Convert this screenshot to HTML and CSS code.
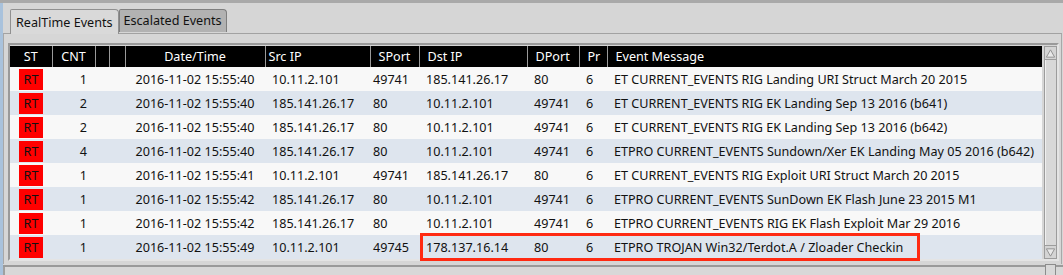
FILE: index.html
```html
<!DOCTYPE html>
<html lang="en">
<head>
  <meta charset="UTF-8">
  <title>Events</title>
  <link rel="stylesheet" href="styles.css">
</head>
<body>

<div class="topline"></div>
<div class="window">

  <div class="tabs">
    <div class="tab active">RealTime Events</div>
    <div class="tab">Escalated Events</div>
  </div>

  <div class="pane">
    <div class="frame">
      <div class="grid">
        <table class="events">
          <colgroup>
            <col style="width:42px"><col style="width:43px"><col style="width:14px"><col style="width:16px">
            <col style="width:140px"><col style="width:105px"><col style="width:49px"><col style="width:108px">
            <col style="width:52px"><col style="width:28px"><col>
          </colgroup>
          <thead>
            <tr>
              <th class="c">ST</th><th class="c">CNT</th><th></th><th></th>
              <th class="c">Date/Time</th><th class="src">Src IP</th><th>SPort</th><th>Dst IP</th>
              <th>DPort</th><th>Pr</th><th>Event Message</th>
            </tr>
          </thead>
          <tbody>
            <tr><td><span class="rt">RT</span></td><td class="cnt">1</td><td></td><td></td><td class="c">2016-11-02 15:55:40</td><td>10.11.2.101</td><td class="sport">49741</td><td>185.141.26.17</td><td>80</td><td>6</td><td>ET CURRENT_EVENTS RIG Landing URI Struct March 20 2015</td></tr>
            <tr><td><span class="rt">RT</span></td><td class="cnt">2</td><td></td><td></td><td class="c">2016-11-02 15:55:40</td><td>185.141.26.17</td><td class="sport">80</td><td>10.11.2.101</td><td>49741</td><td>6</td><td>ET CURRENT_EVENTS RIG EK Landing Sep 13 2016 (b641)</td></tr>
            <tr><td><span class="rt">RT</span></td><td class="cnt">2</td><td></td><td></td><td class="c">2016-11-02 15:55:40</td><td>185.141.26.17</td><td class="sport">80</td><td>10.11.2.101</td><td>49741</td><td>6</td><td>ET CURRENT_EVENTS RIG EK Landing Sep 13 2016 (b642)</td></tr>
            <tr><td><span class="rt">RT</span></td><td class="cnt">4</td><td></td><td></td><td class="c">2016-11-02 15:55:40</td><td>185.141.26.17</td><td class="sport">80</td><td>10.11.2.101</td><td>49741</td><td>6</td><td>ETPRO CURRENT_EVENTS Sundown/Xer EK Landing May 05 2016 (b642)</td></tr>
            <tr><td><span class="rt">RT</span></td><td class="cnt">1</td><td></td><td></td><td class="c">2016-11-02 15:55:41</td><td>10.11.2.101</td><td class="sport">49741</td><td>185.141.26.17</td><td>80</td><td>6</td><td>ET CURRENT_EVENTS RIG Exploit URI Struct March 20 2015</td></tr>
            <tr><td><span class="rt">RT</span></td><td class="cnt">1</td><td></td><td></td><td class="c">2016-11-02 15:55:42</td><td>185.141.26.17</td><td class="sport">80</td><td>10.11.2.101</td><td>49741</td><td>6</td><td>ETPRO CURRENT_EVENTS SunDown EK Flash June 23 2015 M1</td></tr>
            <tr><td><span class="rt">RT</span></td><td class="cnt">1</td><td></td><td></td><td class="c">2016-11-02 15:55:42</td><td>185.141.26.17</td><td class="sport">80</td><td>10.11.2.101</td><td>49741</td><td>6</td><td>ETPRO CURRENT_EVENTS RIG EK Flash Exploit Mar 29 2016</td></tr>
            <tr><td><span class="rt">RT</span></td><td class="cnt">1</td><td></td><td></td><td class="c">2016-11-02 15:55:49</td><td>10.11.2.101</td><td class="sport">49745</td><td>178.137.16.14</td><td>80</td><td>6</td><td>ETPRO TROJAN Win32/Terdot.A / Zloader Checkin</td></tr>
          </tbody>
        </table>

        <div class="scrollbar">
          <div class="sb-btn"><svg width="12" height="11" viewBox="0 0 12 11"><path d="M6 1.5 L10.5 9.5 L1.5 9.5 Z" fill="#e8e8e8" stroke="#8c8c8c"/></svg></div>
          <div class="sb-track"></div>
          <div class="sb-btn"><svg width="12" height="11" viewBox="0 0 12 11"><path d="M6 9.5 L10.5 1.5 L1.5 1.5 Z" fill="#e8e8e8" stroke="#8c8c8c"/></svg></div>
        </div>

        <div class="highlight"></div>
      </div>
    </div>
  </div>

  <div class="statusbar">
    <div class="sb-cell first"></div>
    <div class="sb-cell"></div>
    <div class="grip"></div>
  </div>

</div>

</body>
</html>
```

FILE: styles.css
```css
body {
  margin: 0;
  background: #d6d6d6;
  font-family: "Noto Sans", "Open Sans", sans-serif;
  font-size: 12.6px;
  color: #111;
  width: 1063px;
  height: 275px;
  overflow: hidden;
}

.topline {
  height: 3px;
  background: #a9a9a9;
}

.window {
  border-left: 3px solid #a9c2dc;
  height: 272px;
}

.tabs {
  display: flex;
  align-items: flex-end;
  padding: 5px 0 0 7px;
  height: 25px;
}

.tab {
  height: 22px;
  line-height: 22px;
  padding: 0 4px 0 4px;
  background: #b2b2b2;
  border: 1px solid #7e7e7e;
  border-bottom: none;
  border-radius: 2px 4px 0 0;
  margin-bottom: 1px;
}

.tab.active {
  height: 24px;
  line-height: 25px;
  padding: 0 5px 0 5px;
  background: #d9d9d9;
  border-color: #909090;
  margin-bottom: -1px;
  position: relative;
  z-index: 1;
}

.pane {
  border-top: 1px solid #a2a2a2;
  border-left: 1px solid #a8a8a8;
  border-right: 1px solid #a8a8a8;
  padding: 9px 2px 3px 4px;
  margin-right: 1px;
}

.frame {
  border: 2px solid #9a9a9a;
  border-right-color: #e4e4e4;
  border-bottom-color: #e4e4e4;
  background: #d6d6d6;
}

.grid {
  display: flex;
  gap: 2px;
  position: relative;
  padding-top: 1px;
}

.events {
  width: 1033px;
  table-layout: fixed;
  border-collapse: collapse;
  white-space: nowrap;
}

.events th {
  background: #000;
  color: #fff;
  font-weight: normal;
  height: 21px;
  padding: 0 0 0 8px;
  text-align: left;
  border-right: 1px solid #9a9a9a;
}

.events th:last-child {
  border-right: none;
}

.events th.c {
  text-align: center;
  padding: 0;
}

.events th.src {
  padding-left: 3px;
}

.events td {
  height: 24px;
  padding: 0 0 0 7px;
  overflow: hidden;
}

.events tbody tr:nth-child(odd) {
  background: #f8f8f8;
}

.events tbody tr:nth-child(even) {
  background: #dee5ee;
}

.events td.c {
  text-align: center;
  padding: 0;
}

.events td.cnt {
  text-align: right;
  padding: 0 8px 0 0;
}

.events td.sport {
  padding-left: 3px;
}

.rt {
  display: block;
  width: 24px;
  height: 21px;
  line-height: 21px;
  margin: 0 0 0 2px;
  text-align: center;
  background: #ff0000;
  color: #111;
}

.scrollbar {
  width: 13px;
  display: flex;
  flex-direction: column;
  background: #cfcfcf;
}

.sb-btn {
  height: 12px;
  border: 1px solid #9c9c9c;
  background: #d4d4d4;
  display: flex;
  align-items: center;
  justify-content: center;
}

.sb-btn svg {
  display: block;
}

.sb-track {
  flex: 1;
  border: 1px solid #9c9c9c;
  border-top: none;
  border-bottom: none;
  background: #d8d8d8;
  box-shadow: inset 1px 0 0 #f0f0f0;
}

.highlight {
  position: absolute;
  left: 410px;
  top: 188px;
  width: 494px;
  height: 22px;
  border: 3px solid #ff2a12;
}

.statusbar {
  display: flex;
  height: 9px;
  margin-top: 1px;
  border-top: 2px solid #9a9a9a;
  background: #d8d8d8;
  position: relative;
}

.sb-cell {
  border-left: 1px solid #a0a0a0;
  width: 421px;
}

.sb-cell.first {
  width: 0;
}

.grip {
  position: absolute;
  left: 1042px;
  top: -3px;
  width: 9px;
  height: 10px;
  border: 1px solid #8c8c8c;
  background: #d8d8d8;
}
```
